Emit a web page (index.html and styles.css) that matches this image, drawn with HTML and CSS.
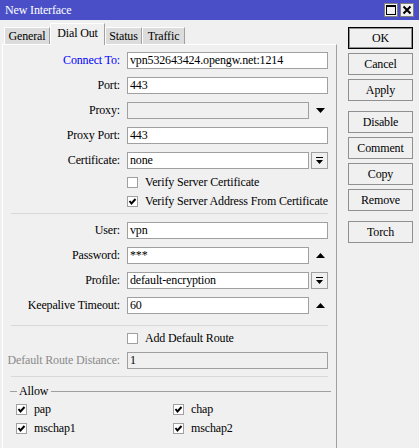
FILE: index.html
```html
<!DOCTYPE html>
<html>
<head>
<meta charset="utf-8">
<title>New Interface</title>
<link rel="stylesheet" href="styles.css">
</head>
<body>
<div class="win">

  <div class="titlebar">
    <span class="ttl">New Interface</span>
    <span class="tbtn">
      <svg width="12" height="12" viewBox="0 0 12 12"><rect x="1.5" y="1.5" width="9" height="9" fill="none" stroke="#000" stroke-width="1"/><line x1="1" y1="2" x2="11" y2="2" stroke="#000" stroke-width="2"/></svg>
    </span>
    <span class="tbtn">
      <svg width="12" height="12" viewBox="0 0 12 12"><path d="M2.5 2.5 L9.5 9.5 M9.5 2.5 L2.5 9.5" stroke="#000" stroke-width="2"/></svg>
    </span>
  </div>

  <div class="main">
    <div class="left">
      <div class="tabs">
        <div class="tab t-gen">General</div>
        <div class="tab active t-dial">Dial Out</div>
        <div class="tab t-stat">Status</div>
        <div class="tab t-traf">Traffic</div>
      </div>

      <div class="panel">
        <div class="row">
          <div class="lbl blue">Connect To:</div>
          <div class="inp">vpn532643424.opengw.net:1214</div>
        </div>
        <div class="row">
          <div class="lbl">Port:</div>
          <div class="inp">443</div>
        </div>
        <div class="row">
          <div class="lbl">Proxy:</div>
          <div class="inp short off"></div>
          <svg class="arrow" width="9" height="5" viewBox="0 0 9 5"><path d="M0 0 H9 L4.5 5 Z" fill="#000"/></svg>
        </div>
        <div class="row">
          <div class="lbl">Proxy Port:</div>
          <div class="inp">443</div>
        </div>
        <div class="row">
          <div class="lbl">Certificate:</div>
          <div class="inp short">none</div>
          <div class="drop"><svg width="7" height="8" viewBox="0 0 7 8"><rect x="0" y="0" width="7" height="1" fill="#000"/><path d="M0 3 H7 L3.5 7 Z" fill="#000"/></svg></div>
        </div>

        <div class="crow">
          <span class="box"></span>
          <span>Verify Server Certificate</span>
        </div>
        <div class="crow">
          <span class="box"><svg width="9" height="9" viewBox="0 0 9 9"><path d="M1.5 4 L3.5 6.5 L7.5 2" fill="none" stroke="#000" stroke-width="2"/></svg></span>
          <span>Verify Server Address From Certificate</span>
        </div>

        <div class="sep"></div>

        <div class="row">
          <div class="lbl">User:</div>
          <div class="inp">vpn</div>
        </div>
        <div class="row">
          <div class="lbl">Password:</div>
          <div class="inp short">***</div>
          <svg class="arrow" width="9" height="5" viewBox="0 0 9 5"><path d="M0 5 H9 L4.5 0 Z" fill="#000"/></svg>
        </div>
        <div class="row">
          <div class="lbl">Profile:</div>
          <div class="inp short">default-encryption</div>
          <div class="drop"><svg width="7" height="8" viewBox="0 0 7 8"><rect x="0" y="0" width="7" height="1" fill="#000"/><path d="M0 3 H7 L3.5 7 Z" fill="#000"/></svg></div>
        </div>
        <div class="row">
          <div class="lbl">Keepalive Timeout:</div>
          <div class="inp short">60</div>
          <svg class="arrow" width="9" height="5" viewBox="0 0 9 5"><path d="M0 5 H9 L4.5 0 Z" fill="#000"/></svg>
        </div>

        <div class="sep sep2"></div>

        <div class="crow">
          <span class="box"></span>
          <span>Add Default Route</span>
        </div>
        <div class="row">
          <div class="lbl grey">Default Route Distance:</div>
          <div class="inp off">1</div>
        </div>

        <div class="sep sep3"></div>

        <div class="group">
          <span class="gline first"></span>
          <span class="gtxt">Allow</span>
          <span class="gline"></span>
        </div>
        <div class="allow">
          <div class="acell"><span class="box"><svg width="9" height="9" viewBox="0 0 9 9"><path d="M1.5 4 L3.5 6.5 L7.5 2" fill="none" stroke="#000" stroke-width="2"/></svg></span>pap</div>
          <div class="acell"><span class="box"><svg width="9" height="9" viewBox="0 0 9 9"><path d="M1.5 4 L3.5 6.5 L7.5 2" fill="none" stroke="#000" stroke-width="2"/></svg></span>chap</div>
          <div class="acell"><span class="box"><svg width="9" height="9" viewBox="0 0 9 9"><path d="M1.5 4 L3.5 6.5 L7.5 2" fill="none" stroke="#000" stroke-width="2"/></svg></span>mschap1</div>
          <div class="acell"><span class="box"><svg width="9" height="9" viewBox="0 0 9 9"><path d="M1.5 4 L3.5 6.5 L7.5 2" fill="none" stroke="#000" stroke-width="2"/></svg></span>mschap2</div>
        </div>
      </div>
    </div>

    <div class="side">
      <div class="btn ok">OK</div>
      <div class="btn">Cancel</div>
      <div class="btn">Apply</div>
      <div class="btn gap">Disable</div>
      <div class="btn">Comment</div>
      <div class="btn">Copy</div>
      <div class="btn">Remove</div>
      <div class="btn gap">Torch</div>
    </div>
  </div>

</div>
</body>
</html>
```

FILE: styles.css
```css
body {
    margin: 0;
    background: #f0f0f0;
    font-family: "Liberation Serif", serif;
    font-size: 12px;
    letter-spacing: -0.15px;
    color: #000;
    white-space: nowrap;
}
.win {
    width: 419px;
    height: 448px;
    overflow: hidden;
}
.titlebar {
    height: 20px;
    background: #4a4fc7;
    display: flex;
    align-items: center;
    padding: 0 5px 0 5px;
}
.ttl {
    color: #fff;
    flex: 1;
}
.tbtn {
    width: 14px;
    height: 14px;
    background: #f0f0f0;
    border: 1px solid #808080;
    box-sizing: border-box;
    display: flex;
    align-items: center;
    justify-content: center;
    margin-left: 2px;
}
.main {
    display: flex;
}
.left {
    width: 337px;
    padding-left: 2px;
    box-sizing: border-box;
}
.tabs {
    height: 24px;
    display: flex;
    align-items: flex-end;
    padding-left: 2px;
}
.tab {
    height: 17px;
    line-height: 16px;
    text-align: center;
    background: #dcdcdc;
    border-top: 1px solid #fff;
    border-left: 1px solid #fff;
    border-right: 1px solid #a0a0a0;
    box-sizing: border-box;
}
.tab.active {
    height: 22px;
    background: #f0f0f0;
    line-height: 18px;
    margin-bottom: -1px;
    position: relative;
}
.t-gen { width: 46px; }
.t-dial { width: 55px; }
.t-stat { width: 37px; }
.t-traf { width: 43px; }
.panel {
    height: 404px;
    border-top: 1px solid #fff;
    border-left: 1px solid #fff;
    border-right: 1px solid #a0a0a0;
    padding-top: 3px;
    box-sizing: border-box;
}
.row {
    display: flex;
    align-items: center;
    height: 25px;
}
.lbl {
    width: 117px;
    margin-right: 7px;
    text-align: right;
}
.blue { color: #0000ff; }
.grey { color: #8a8a8a; }
.inp {
    width: 201px;
    height: 17px;
    box-sizing: border-box;
    border: 1px solid #a0a0a0;
    background: #fff;
    padding-left: 2px;
    line-height: 15px;
    overflow: hidden;
}
.inp.short { width: 182px; }
.inp.off { background: #f0f0f0; }
.arrow { margin-left: 7px; }
.drop {
    width: 17px;
    height: 17px;
    margin-left: 2px;
    box-sizing: border-box;
    border: 1px solid #a0a0a0;
    display: flex;
    align-items: center;
    justify-content: center;
}
.crow {
    display: flex;
    align-items: center;
    height: 19px;
    padding-left: 124px;
}
.box {
    width: 11px;
    height: 11px;
    box-sizing: border-box;
    border: 1px solid #a0a0a0;
    background: #fff;
    margin-right: 7px;
    display: flex;
    align-items: center;
    justify-content: center;
    flex: none;
}
.sep {
    margin: 2px 8px 4px 8px;
    border-top: 1px solid #d8d8d8;
}
.sep2 { margin-top: 7px; margin-bottom: 3px; }
.sep3 { margin-top: 3px; margin-bottom: 0; }
.group {
    display: flex;
    align-items: center;
    height: 23px;
    padding: 5px 5px 0 7px;
    box-sizing: border-box;
}
.gtxt { line-height: 14px; }
.gline {
    flex: 1;
    border-top: 1px solid #a0a0a0;
    margin-left: 3px;
}
.gline.first {
    flex: none;
    width: 7px;
    margin: 0 2px 0 0;
}
.allow {
    display: grid;
    grid-template-columns: 157px 157px;
    padding-left: 13px;
}
.acell {
    display: flex;
    align-items: center;
    height: 19px;
}
.side {
    padding-top: 7px;
    margin-left: 11px;
}
.btn {
    width: 65px;
    height: 22px;
    box-sizing: border-box;
    border: 1px solid #909090;
    text-align: center;
    line-height: 20px;
    margin-bottom: 4px;
}
.btn.ok {
    border-color: #000;
    box-shadow: inset 0 0 0 1px #909090;
}
.btn.gap { margin-top: 10px; }
```
